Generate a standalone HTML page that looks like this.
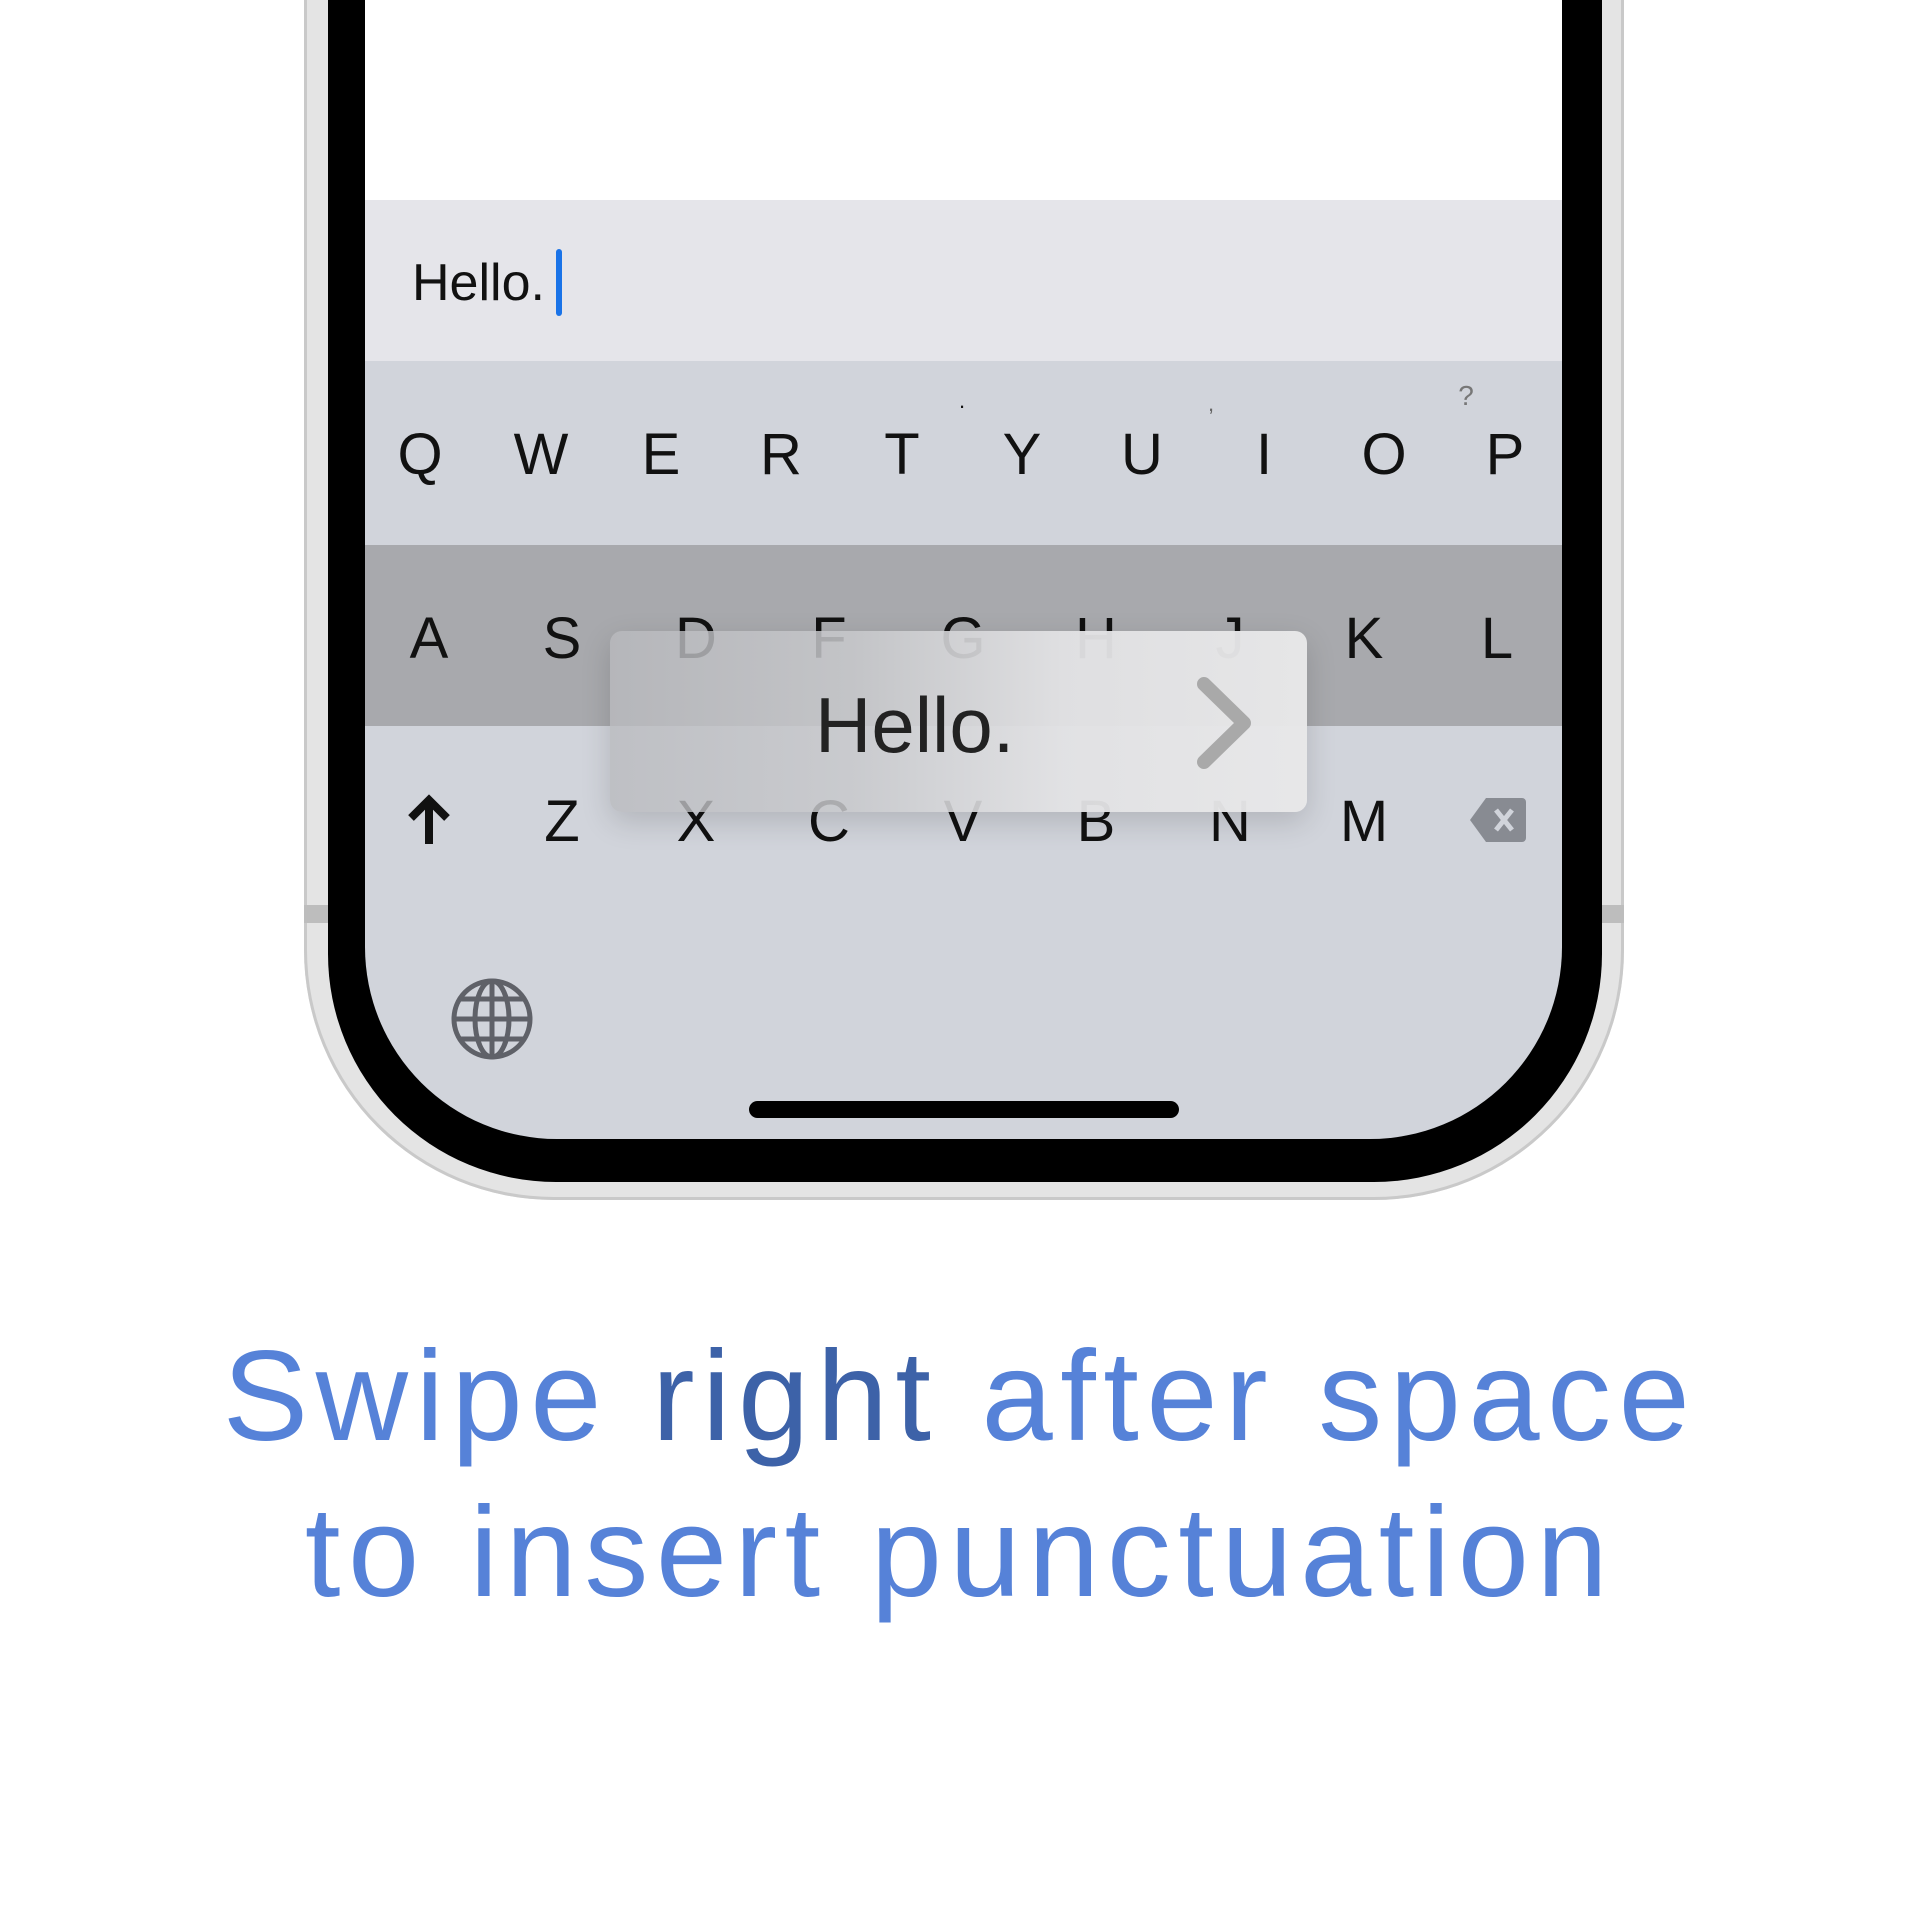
<!DOCTYPE html>
<html><head><meta charset="utf-8"><style>
html,body{margin:0;padding:0;width:1920px;height:1920px;background:#fff;overflow:hidden;font-family:"Liberation Sans",sans-serif;}
.abs{position:absolute;}
.silver{left:304px;top:-300px;width:1320px;height:1500px;border-radius:0 0 250px 250px;background:#e4e4e4;box-shadow:inset 0 0 0 3px #c9c9c9;}
.black{left:328px;top:-300px;width:1274px;height:1482px;border-radius:0 0 228px 228px;background:#000;}
.screen{left:365px;top:-300px;width:1197px;height:1439px;border-radius:0 0 192px 192px;background:#d1d4db;overflow:hidden;}
.k{position:absolute;font-size:58px;color:#111;transform:translateX(-50%);line-height:1;}
</style></head><body>
<div class="abs silver"></div>
<div class="abs" style="left:304px;top:905px;width:24px;height:18px;background:#bdbdbd"></div>
<div class="abs" style="left:1602px;top:905px;width:22px;height:18px;background:#bdbdbd"></div>
<div class="abs black"></div>
<div class="abs screen">
  <div class="abs" style="left:0;top:0;width:1197px;height:500px;background:#fff"></div>
  <div class="abs" style="left:0;top:500px;width:1197px;height:161px;background:#e5e5ea"></div>
  <div class="abs" style="left:47px;top:553px;font-size:52px;color:#111;">Hello.</div>
  <div class="abs" style="left:191px;top:549px;width:6px;height:67px;background:#1a73e8;border-radius:3px"></div>
  <div class="abs" style="left:0;top:845px;width:1197px;height:181px;background:#a8a9ad"></div>
</div>
<div class="abs" style="left:0;top:0;width:1920px;height:1920px;">
  <div class="k" style="left:420px;top:426px">Q</div>
  <div class="k" style="left:541px;top:426px">W</div>
  <div class="k" style="left:661px;top:426px">E</div>
  <div class="k" style="left:781px;top:426px">R</div>
  <div class="k" style="left:902px;top:426px">T</div>
  <div class="k" style="left:1022px;top:426px">Y</div>
  <div class="k" style="left:1142px;top:426px">U</div>
  <div class="k" style="left:1264px;top:426px">I</div>
  <div class="k" style="left:1384px;top:426px">O</div>
  <div class="k" style="left:1505px;top:426px">P</div>
  <div class="k" style="left:962px;top:390px;font-size:22px">.</div>
  <div class="k" style="left:1211px;top:393px;font-size:22px;color:#666">,</div>
  <div class="k" style="left:1466px;top:382px;font-size:28px;color:#777">?</div>
  <div class="k" style="left:429px;top:610px">A</div>
  <div class="k" style="left:562px;top:610px">S</div>
  <div class="k" style="left:696px;top:610px">D</div>
  <div class="k" style="left:829px;top:610px">F</div>
  <div class="k" style="left:963px;top:610px">G</div>
  <div class="k" style="left:1096px;top:610px">H</div>
  <div class="k" style="left:1230px;top:610px">J</div>
  <div class="k" style="left:1364px;top:610px">K</div>
  <div class="k" style="left:1497px;top:610px">L</div>
  <svg class="abs" style="left:405px;top:792px" width="48" height="56" viewBox="0 0 48 56"><path d="M24 52V8M6 26L24 8L42 26" stroke="#111" stroke-width="8" fill="none" stroke-linejoin="miter"/></svg>
  <div class="k" style="left:562px;top:793px">Z</div>
  <div class="k" style="left:696px;top:793px">X</div>
  <div class="k" style="left:829px;top:793px">C</div>
  <div class="k" style="left:963px;top:793px">V</div>
  <div class="k" style="left:1096px;top:793px">B</div>
  <div class="k" style="left:1230px;top:793px">N</div>
  <div class="k" style="left:1364px;top:793px">M</div>
  <svg class="abs" style="left:1468px;top:796px" width="60" height="48" viewBox="0 0 60 48"><path d="M18 2H54a4 4 0 0 1 4 4V42a4 4 0 0 1-4 4H18L2 24Z" fill="#888b92"/><path d="M28 14L44 34M44 14L28 34" stroke="#d1d4db" stroke-width="5"/></svg>
  <svg class="abs" style="left:450px;top:977px" width="84" height="84" viewBox="0 0 84 84" fill="none" stroke="#5f6168" stroke-width="5"><circle cx="42" cy="42" r="38"/><ellipse cx="42" cy="42" rx="17" ry="38"/><path d="M42 4V80M4 42H80M10 22H74M10 62H74"/></svg>
  <div class="abs" style="left:749px;top:1101px;width:430px;height:17px;border-radius:9px;background:#000"></div>
  <div class="abs" style="left:610px;top:631px;width:697px;height:181px;border-radius:12px;background:linear-gradient(90deg,rgba(185,186,190,0.78) 0%,rgba(200,201,204,0.85) 35%,rgba(226,226,228,0.95) 65%,rgba(232,232,233,0.97) 100%);box-shadow:0 10px 30px rgba(0,0,0,0.15)"></div>
  <div class="abs" style="left:815px;top:680px;font-size:78px;color:#222;">Hello.</div>
  <svg class="abs" style="left:1190px;top:670px" width="70" height="106" viewBox="0 0 70 106"><path d="M14 14L54 53L14 92" stroke="#a9a9a9" stroke-width="14" fill="none" stroke-linecap="round" stroke-linejoin="round"/></svg>
</div>
<div class="abs" style="left:0;top:1319px;width:1920px;text-align:center;font-size:128px;color:#5682d8;letter-spacing:7.5px;line-height:156px;">Swipe <span style="color:#3d62a8">right</span> after space<br>to insert punctuation</div>
</body></html>
